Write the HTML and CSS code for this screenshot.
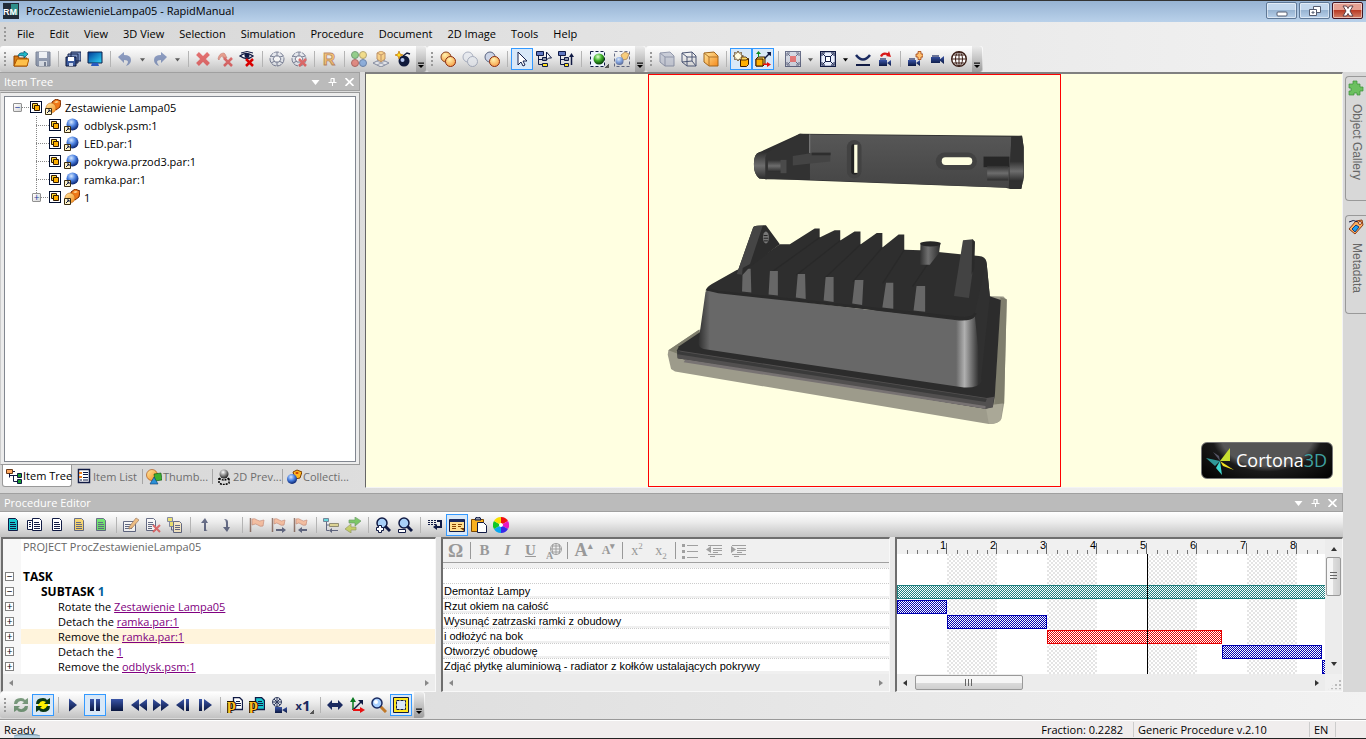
FILE: index.html
```
<!DOCTYPE html>
<html lang="en">
<head>
  <meta charset="utf-8" />
  <title>ProcZestawienieLampa05 - RapidManual</title>
  <meta name="viewport" content="width=device-width, initial-scale=1" />
  <link rel="stylesheet" href="styles.css">
</head>
<body>
  <svg class="sprite" width="0" height="0" aria-hidden="true">
    <defs>
      <linearGradient id="g-orange" x1="0" y1="0" x2="1" y2="1"><stop offset="0" stop-color="#ffe9a0"/><stop offset="1" stop-color="#f58a1c"/></linearGradient>
      <linearGradient id="g-navy" x1="0" y1="0" x2="0" y2="1"><stop offset="0" stop-color="#3a55a8"/><stop offset="1" stop-color="#0a1740"/></linearGradient>
      <linearGradient id="g-screen" x1="0" y1="0" x2="1" y2="1"><stop offset="0" stop-color="#003a98"/><stop offset="1" stop-color="#30d8f8"/></linearGradient>
      <radialGradient id="g-blue" cx=".4" cy=".3" r=".7"><stop offset="0" stop-color="#d5e8ff"/><stop offset=".5" stop-color="#4a80e0"/><stop offset="1" stop-color="#0a2470"/></radialGradient>
      <radialGradient id="g-green" cx=".4" cy=".3" r=".7"><stop offset="0" stop-color="#e0ffd0"/><stop offset=".5" stop-color="#3fb02a"/><stop offset="1" stop-color="#063c08"/></radialGradient>
      <radialGradient id="g-gold" cx=".4" cy=".3" r=".8"><stop offset="0" stop-color="#fff3b0"/><stop offset="1" stop-color="#f7963a"/></radialGradient>
      <radialGradient id="g-grey" cx=".4" cy=".3" r=".7"><stop offset="0" stop-color="#fff"/><stop offset="1" stop-color="#222"/></radialGradient>
      <linearGradient id="g-front" x1="0" y1="0" x2="1" y2="0"><stop offset="0" stop-color="#303030"/><stop offset=".04" stop-color="#686868"/><stop offset=".91" stop-color="#686868"/><stop offset=".94" stop-color="#b0b0b0"/><stop offset=".99" stop-color="#303030"/></linearGradient>
      <linearGradient id="g-wall" x1="0" y1="0" x2="0" y2="1"><stop offset="0" stop-color="#575757"/><stop offset="1" stop-color="#454545"/></linearGradient>
      <linearGradient id="g-tube" x1="0" y1="0" x2="0" y2="1"><stop offset="0" stop-color="#303030"/><stop offset=".5" stop-color="#6d6d6d"/><stop offset="1" stop-color="#2c2c2c"/></linearGradient>
      <linearGradient id="g-tube-v" x1="0" y1="0" x2="1" y2="0"><stop offset="0" stop-color="#303030"/><stop offset=".4" stop-color="#707070"/><stop offset="1" stop-color="#2c2c2c"/></linearGradient>
    </defs>

    <symbol id="i-open" viewBox="0 0 16 16"><path d="M1 15V5h4l1 2h8v8z" fill="#d97a10" stroke="#8a3f00"/><path d="M1 15l3-7h12l-2 7z" fill="#ffc04a" stroke="#b05a00"/><path d="M5 5q1-4 6-3V0l4 3-4 4V5q-4-1-6 0z" fill="#20b8c8" stroke="#054a68" stroke-width=".7"/></symbol>
    <symbol id="i-save" viewBox="0 0 16 16"><path d="M1 1h14v14H2l-1-1z" fill="#5a6a8c" stroke="#33415f"/><path d="M4 1h8v6H4z" fill="#eef2f8"/><path d="M4 10h8v5H4z" fill="#cfd6e2"/><path d="M9 11h2v4H9z" fill="#33415f"/></symbol>
    <symbol id="i-saveall" viewBox="0 0 16 16"><path d="M6 1h10v9H6zM3 3h10v9H3z" fill="#7890c0" stroke="#14224c"/><path d="M1 6h10v9H1z" fill="#3c5a9c" stroke="#0a1538"/><path d="M3 6h6v4H3z" fill="#fff"/><path d="M4 12h4v3H4z" fill="#c8d4ec"/></symbol>
    <symbol id="i-monitor" viewBox="0 0 16 16"><path d="M1 1h14v11H1z" fill="url(#g-screen)" stroke="#0c1c48"/><path d="M5 12h6l1 3H4z" fill="#2a5ac0"/></symbol>
    <symbol id="i-undo" viewBox="0 0 16 16"><path d="M1 6l6-5v3q7 0 7 5 0 4-5 6 2-3 2-4 0-2-4-2v3z" fill="#4a64a0"/></symbol>
    <symbol id="i-redo" viewBox="0 0 16 16"><path d="M15 6L9 1v3Q2 4 2 9q0 4 5 6-2-3-2-4 0-2 4-2v3z" fill="#4a64a0"/></symbol>
    <symbol id="i-x" viewBox="0 0 16 16"><path d="M2.500 2.500l11 11M13.500 2.500l-11 11" stroke="#d91c1c" stroke-width="4"/></symbol>
    <symbol id="i-fx" viewBox="0 0 16 16"><path d="M1 8q1-6 6-6l1 1 2 4H6V5q-3 0-4 4z" fill="#e06a50" stroke="#b03020" stroke-width=".6"/><path d="M7 7l8 8M15 7l-8 8" stroke="#d01818" stroke-width="2.500"/></symbol>
    <symbol id="i-eyex" viewBox="0 0 16 16"><path d="M1 5q6-5 13 0-6 5-13 0z" fill="#fff" stroke="#101a44" stroke-width="1.400"/><circle cx="8" cy="4.500" r="2.500" fill="#101a44"/><path d="M2 2q6-3 12 0" stroke="#101a44" fill="none"/><path d="M7 8l7 7M14 8l-7 7" stroke="#d90000" stroke-width="2.500"/></symbol>
    <symbol id="i-cell" viewBox="0 0 16 16"><circle cx="8" cy="8" r="7" fill="#dfe3ec" stroke="#303a5c" stroke-dasharray="5 1"/><path d="M8 1v4M8 11v4M1.500 5l4 1M14.500 5l-4 1M2 12l4-2M14 12l-4-2" stroke="#303a5c"/><path d="M6 5h4l2 3-2 3H6L4 8z" fill="#fff" stroke="#303a5c"/></symbol>
    <symbol id="i-cellx" viewBox="0 0 16 16"><circle cx="8" cy="8" r="7" fill="#dfe3ec" stroke="#303a5c" stroke-dasharray="5 1"/><path d="M8 1v4M1.500 5l4 1M14.500 5l-4 1M2 12l4-2" stroke="#303a5c"/><path d="M6 5h4l2 3-2 3H6L4 8z" fill="#fff" stroke="#303a5c"/><path d="M8 8l7 7M15 8l-7 7" stroke="#d91c1c" stroke-width="2.500"/></symbol>
    <symbol id="i-r" viewBox="0 0 16 16"><text x="2" y="14" font-family="Liberation Sans" font-size="17" font-weight="bold" fill="#ffab20" stroke="#9a4a10" stroke-width=".8">R</text></symbol>
    <symbol id="i-dots" viewBox="0 0 16 16"><circle cx="4" cy="4" r="3.500" fill="#58b848" stroke="#27672a"/><circle cx="12" cy="4" r="3.500" fill="#f2d048" stroke="#8c7420"/><circle cx="4" cy="12" r="3.500" fill="#e25548" stroke="#8a2018"/><circle cx="12" cy="12" r="3.500" fill="#5a8fd8" stroke="#234a88"/></symbol>
    <symbol id="i-grid3d" viewBox="0 0 16 16"><path d="M0 12l8-4 8 4-8 4z" fill="#e6e8ef" stroke="#4c587a"/><path d="M4 10l8 4M12 10l-8 4" stroke="#4c587a" stroke-width=".7"/><path d="M4 2l4-2 4 2v6l-4 3-4-3z" fill="#ffc04a" stroke="#a35a10"/><path d="M4 2l4 2 4-2M8 4v6" stroke="#a35a10" fill="none"/></symbol>
    <symbol id="i-bomb" viewBox="0 0 16 16"><circle cx="9" cy="10" r="5.500" fill="#101a3c"/><circle cx="7.500" cy="9" r="2" fill="#b8c8f0"/><path d="M8 5l4-3 3 1" stroke="#101a3c" stroke-width="1.500" fill="none"/><path d="M4 0l1 3 3 1-3 1-1 3-1-3-3-1 3-1z" fill="#ffe020" stroke="#c07000" stroke-width=".7"/></symbol>
    <symbol id="i-bal2" viewBox="0 0 16 16"><circle cx="6" cy="6" r="5" fill="url(#g-gold)" stroke="#8a4420"/><circle cx="10.500" cy="10.500" r="5" fill="url(#g-gold)" stroke="#8a2a10"/></symbol>
    <symbol id="i-bal0" viewBox="0 0 16 16"><circle cx="6" cy="6" r="5" fill="#e2e6ee" stroke="#7c86a0"/><circle cx="10.500" cy="10.500" r="5" fill="#e2e6ee" stroke="#7c86a0"/></symbol>
    <symbol id="i-bal1" viewBox="0 0 16 16"><circle cx="6" cy="6" r="5" fill="#ccd4e6" stroke="#5a6480"/><circle cx="10.500" cy="10.500" r="5" fill="url(#g-gold)" stroke="#8a2a10"/></symbol>
    <symbol id="i-cursor" viewBox="0 0 16 16"><path d="M4 1v13l3-3 2 4 2-1-2-4h4z" fill="#fff" stroke="#14204c"/></symbol>
    <symbol id="i-treesel" viewBox="0 0 16 16"><path d="M.500.500h7v4h-7z" fill="#6078c0" stroke="#101a44"/><path d="M2.500 5v8.500H7M3 8.500h4" stroke="#101a44" fill="none"/><path d="M6.500 6.500h4v3h-4z" fill="#8c94a8" stroke="#101a44"/><path d="M6.500 12.500h5v3h-5z" fill="#ffe020" stroke="#101a44"/><path d="M10.500 1v8l2-2h3z" fill="#fff" stroke="#101a44"/></symbol>
    <symbol id="i-treeup" viewBox="0 0 16 16"><path d="M.500.500h7v4h-7z" fill="#6078c0" stroke="#101a44"/><path d="M2.500 5v8.500H7M3 8.500h4" stroke="#101a44" fill="none"/><path d="M6.500 6.500h4v3h-4z" fill="#8c94a8" stroke="#101a44"/><path d="M6.500 12.500h4v3h-4z" fill="#ffe020" stroke="#101a44"/><path d="M13.500 14V5" stroke="#101a44" stroke-width="1.500"/><path d="M11 6l2.500-4L16 6z" fill="#101a44"/></symbol>
    <symbol id="i-ball-sel" viewBox="0 0 16 16"><rect x=".5" y=".5" width="14" height="15" fill="#eef4ff" stroke="#101a44" stroke-dasharray="3 2"/><circle cx="9" cy="8" r="5.500" fill="url(#g-green)"/></symbol>
    <symbol id="i-part-sel" viewBox="0 0 16 16"><rect x=".5" y=".5" width="15" height="15" fill="none" stroke="#101a44" stroke-dasharray="3 2"/><path d="M7 4l4-3 4 2-2 5-4 1z" fill="#ffb830" stroke="#a06010"/><circle cx="5.500" cy="10" r="4" fill="url(#g-blue)"/></symbol>
    <symbol id="i-cube" viewBox="0 0 16 16"><path d="M1 2l10-1 4 4v10H6l-5-4z" fill="#b0b6c8" stroke="#566080"/><path d="M1 2l5 4h9M6 6v9" stroke="#566080" fill="none"/></symbol>
    <symbol id="i-cubew" viewBox="0 0 16 16"><path d="M1 2l10-1 4 4v10H6l-5-4zM1 2l5 4h9M6 6v9M11 1v9l4 5M11 10l-10 1" fill="none" stroke="#4c5674"/></symbol>
    <symbol id="i-cubeo" viewBox="0 0 16 16"><path d="M1 2l10-1 4 4v10H6l-5-4z" fill="url(#g-orange)" stroke="#a0641c"/><path d="M1 2l5 4h9M6 6v9" stroke="#b0742c" fill="none"/></symbol>
    <symbol id="i-explode" viewBox="0 0 16 16"><path d="M7.500 8.500h6l2-1v6l-2 2h-6z" fill="#ffb000" stroke="#3a1c00"/><path d="M5 7l3-1h5l2 2-2 1H8z" fill="#ffd860" stroke="#3a1c00" stroke-width=".8"/><path d="M5 0l1.200 2.200L8.500 1.500 8 4l2.500 1L8 6l.500 2.500L6.200 8 5 10 3.800 8l-2.300.500L2 6 0 5l2-1-.500-2.500 2.300.700z" fill="#fffbe0" stroke="#5a3a10" stroke-width=".8"/></symbol>
    <symbol id="i-moveaxis" viewBox="0 0 16 16"><path d="M1 8l2-2h7v7l-2 2H1z" fill="#ffd860" stroke="#3a1c00"/><path d="M1 8h7v7H1z" fill="#ffb000" stroke="#3a1c00"/><path d="M3 6V3H1l2.500-3L6 3H4v3z" fill="#0a8a20"/><path d="M9 7l4-4-1-2h4v4l-2-1-4 4z" fill="#101a44"/><path d="M8 12.500h4V11l4 2.500-4 2.500v-2H8z" fill="#e81010"/></symbol>
    <symbol id="i-fitred" viewBox="0 0 16 16"><rect x=".5" y=".5" width="15" height="15" fill="#c4cadc" stroke="#101a44"/><path d="M2 5V2h3M11 2h3v3M14 11v3h-3M5 14H2v-3M3 3l3 3M13 3l-3 3M3 13l3-3M13 13l-3-3" stroke="#101a44" fill="none"/><path d="M5 5h6v6H5z" fill="#e03030"/></symbol>
    <symbol id="i-fit" viewBox="0 0 16 16"><rect x=".5" y=".5" width="15" height="15" fill="#eaf0ff" stroke="#101a44" stroke-width="1.500"/><path d="M2 5V2h3M11 2h3v3M14 11v3h-3M5 14H2v-3M3 3l3 3M13 3l-3 3M3 13l3-3M13 13l-3-3" stroke="#101a44" fill="none"/><path d="M5.500 5.500h5v5h-5z" fill="#fff" stroke="#101a44"/></symbol>
    <symbol id="i-floor" viewBox="0 0 16 16"><path d="M1 4q7 9 14 0" stroke="#1a2a60" stroke-width="2.500" fill="none"/><path d="M1 14h14" stroke="#101a44" stroke-width="2"/></symbol>
    <symbol id="i-camundo" viewBox="0 0 16 16"><path d="M3 5q2-5 8-3l1-2 2 6-5-1 1-1Q6 3 5 6z" fill="#d81818"/><path d="M2 9h8v6H2zM10 12l4-3v6z" fill="url(#g-navy)"/><path d="M3 7h6v2H3z" fill="#6a7498"/></symbol>
    <symbol id="i-camplus" viewBox="0 0 16 16"><path d="M1 9h8v6H1zM9 12l4-3v6z" fill="url(#g-navy)"/><path d="M2 7h6v2H2z" fill="#6a7498"/><path d="M11 .500h3V3h2v3h-2v2.500h-3V6H9V3h2z" fill="#ffc070" stroke="#a04010" stroke-width=".8"/></symbol>
    <symbol id="i-cam" viewBox="0 0 16 16"><path d="M2 6h9v6H2zM10 9l5-4v8z" fill="url(#g-navy)"/><path d="M3 4h7v2H3z" fill="#6a7498"/></symbol>
    <symbol id="i-globe" viewBox="0 0 16 16"><circle cx="8" cy="8" r="7.300" fill="#fff" stroke="#3a1c14" stroke-width="1.400"/><path d="M8 1v14M1 8h14M2.500 4h11M2.500 12h11" stroke="#3a1c14"/><ellipse cx="8" cy="8" rx="3.500" ry="7" fill="none" stroke="#3a1c14"/></symbol>

    <symbol id="i-assembly" viewBox="0 0 16 16"><path d="M7 3l4-3 5 2-1 6-4 3-4-3z" fill="#f07818" stroke="#7a2c00"/><path d="M9 3l3-1 2 1-3 1z" fill="#ffd890"/><circle cx="6" cy="9" r="5" fill="url(#g-orange)" stroke="#b05000" stroke-width=".5"/><path d="M.500 9.500h6v6h-6z" fill="#fff4c8" stroke="#3a2c10"/><path d="M2 14l3-3M3 11h2v2" stroke="#101a44" fill="none"/></symbol>
    <symbol id="i-part" viewBox="0 0 16 16"><circle cx="8.500" cy="7.500" r="6" fill="url(#g-blue)"/><path d="M.500 9.500h6v6h-6z" fill="#fff4c8" stroke="#3a2c10"/><path d="M2 14l3-3M3 11h2v2" stroke="#101a44" fill="none"/></symbol>

    <symbol id="i-tabtree" viewBox="0 0 16 16"><path d="M.500 1.500h6v4h-6z" fill="#ffa860" stroke="#6a3818"/><path d="M3.500 5.500v4M3.500 7.500h8M7.500 7.500v6h4M7 3.500h2" stroke="#101a44" fill="none"/><path d="M11.500 5.500h4v4h-4zM11.500 11.500h4v4h-4z" fill="#18a030" stroke="#101a44"/></symbol>
    <symbol id="i-tablist" viewBox="0 0 16 16"><path d="M2.500 1.500h11v13h-11z" fill="#fff" stroke="#101a44" stroke-width="1.500"/><path d="M3 5h3M3 9h3" stroke="#f08020" stroke-width="2"/><path d="M4 12h2M7 4.500h5M7 6.500h5M7 9.500h5M7 12h5" stroke="#101a44"/></symbol>
    <symbol id="i-tabthumb" viewBox="0 0 16 16"><circle cx="6" cy="6" r="5.500" fill="url(#g-orange)" stroke="#a04000" stroke-width=".6"/><path d="M8 5l7-1 1 7-7 1z" fill="#40b030" stroke="#0a5010" stroke-width=".6"/><path d="M8 8l4 7H4z" fill="#2a90d8" stroke="#0a3a70" stroke-width=".6"/></symbol>
    <symbol id="i-tab2d" viewBox="0 0 16 16"><circle cx="8" cy="5" r="4.500" fill="url(#g-grey)"/><path d="M3 9q5 4 10 0M3 9v5q5 3 10 0V9" stroke="#000" stroke-width="1.500" stroke-dasharray="2 1" fill="none"/></symbol>
    <symbol id="i-tabcoll" viewBox="0 0 16 16"><path d="M7 3l4-2 5 2-2 6-5 1z" fill="#ffb820" stroke="#7a3c00"/><path d="M9 4l2-1 2 1-2 1z" fill="#c02000"/><circle cx="6" cy="10" r="5" fill="url(#g-blue)"/></symbol>
    <symbol id="i-puzzle" viewBox="0 0 16 16"><path d="M1 4h4V1h4v3h3v3h3v4h-3v4H9v-2H6v2H1v-4h2V8H1z" fill="#6cc060" stroke="#3a9038" stroke-width=".7"/></symbol>
    <symbol id="i-tag" viewBox="0 0 16 16"><path d="M1 10L8 2l6-1 1 5-8 9z" fill="#ffb060" stroke="#8a3c18"/><path d="M4 10l4-4 3 2-4 5z" fill="#20a0f0" stroke="#104080"/><circle cx="12" cy="4" r="1.500" fill="#fff" stroke="#8a3c18"/><path d="M1 3q4-3 9 0" stroke="#101a44" fill="none"/></symbol>

    <symbol id="i-doc" viewBox="0 0 16 16"><path d="M3.500 1.500h7l2 2v10h-9z" fill="currentColor" stroke="#101a44"/><path d="M5 5.500h5M5 7.500h6M5 9.500h6M5 11.500h6" stroke="#101a44"/></symbol>
    <symbol id="i-docs" viewBox="0 0 16 16"><path d="M.500 3.500h7v9h-7z" fill="#fff" stroke="#101a44"/><path d="M5.500 1.500h7l2 2v10h-9z" fill="#fff" stroke="#101a44"/><path d="M2 5.500h2M2 7.500h2M2 9.500h2M7 5.500h5M7 7.500h6M7 9.500h6M7 11.500h6" stroke="#101a44"/></symbol>
    <symbol id="i-edit" viewBox="0 0 16 16"><path d="M.500 4.500h12v10H.500z" fill="#fff" stroke="#101a44"/><path d="M2 7.500h6M2 9.500h5M2 11.500h7" stroke="#101a44"/><path d="M6 10l7-9 3 2-7 8-3 1z" fill="#f0a040" stroke="#7a4418" stroke-width=".8"/></symbol>
    <symbol id="i-docx" viewBox="0 0 16 16"><path d="M1.500 1.500h7l2 2v10h-9z" fill="#fff" stroke="#101a44"/><path d="M3 5.500h5M3 7.500h6M3 9.500h4M3 11.500h4" stroke="#101a44"/><path d="M8 8l7 7M15 8l-7 7" stroke="#d82020" stroke-width="2"/></symbol>
    <symbol id="i-docy" viewBox="0 0 16 16"><path d="M.500.500h5v4h-5zM2.500 4.500h5v5h-5z" fill="#e8d820" stroke="#3c466c"/><path d="M6.500 4.500h6l2 2v9h-8z" fill="#ffe8b0" stroke="#101a44"/><path d="M8 8.500h5M8 10.500h5M8 12.500h5M4.500 10v3H6" stroke="#101a44" fill="none"/></symbol>
    <symbol id="i-up" viewBox="0 0 16 16"><path d="M7 14V6H4l4-5 3 5H9v6q0 2 2 2z" fill="#101a44"/></symbol>
    <symbol id="i-down" viewBox="0 0 16 16"><path d="M5 2q4 0 4 3v5h2l-3 5-4-5h3V6q0-3-2-4z" fill="#101a44"/></symbol>
    <symbol id="i-flag" viewBox="0 0 16 16"><path d="M1.500 1v14" stroke="#5a3020" stroke-width="1.500"/><path d="M3 2q3-1 5 1t7 0l-1 6q-3 1-5-1t-6 0z" fill="#f8a070" stroke="#b05030" stroke-width=".7"/></symbol>
    <symbol id="i-flagr" viewBox="0 0 16 16"><path d="M1.500 1v14" stroke="#5a3020" stroke-width="1.500"/><path d="M3 2q3-1 5 1t6 0l-1 5q-3 1-5-1t-5 0z" fill="#f8a070" stroke="#b05030" stroke-width=".7"/><path d="M5 12h6v-2l4 3-4 3v-2H5z" fill="#101a44"/></symbol>
    <symbol id="i-flagl" viewBox="0 0 16 16"><path d="M1.500 1v14" stroke="#5a3020" stroke-width="1.500"/><path d="M3 2q3-1 5 1t6 0l-1 5q-3 1-5-1t-5 0z" fill="#f8a070" stroke="#b05030" stroke-width=".7"/><path d="M14 12H9v-2l-4 3 4 3v-2h5z" fill="#101a44"/></symbol>
    <symbol id="i-branch" viewBox="0 0 16 16"><path d="M.500 1.500h5v3h-5z" fill="#10c8d0" stroke="#204060"/><path d="M3.500 5v8.500H6M3 8h3" stroke="#101a44" fill="none"/><path d="M6.500 6.500h9v3h-9z" fill="#d8c860" stroke="#5a5428"/><path d="M15 13H9v-2l-3 2.500L9 16v-2h6z" fill="#101a44"/></symbol>
    <symbol id="i-swap" viewBox="0 0 16 16"><path d="M4 3h6V0l6 4-6 5V6H4z" fill="#30b010" stroke="#206818" stroke-width=".7"/><path d="M11 10H6V7l-6 5 6 4v-3h5z" fill="#b8c820" stroke="#687018" stroke-width=".7"/></symbol>
    <symbol id="i-zoomin" viewBox="0 0 16 16"><path d="M10 9l5 5" stroke="#101a44" stroke-width="3"/><circle cx="7" cy="6" r="5" fill="#a8d0f8" stroke="#101a44" stroke-width="1.500"/><path d="M3.500 8.500h3v2h2v3h-2v2h-3v-2h-2v-3h2z" fill="#fff" stroke="#101a44"/></symbol>
    <symbol id="i-zoomout" viewBox="0 0 16 16"><path d="M10 9l5 5" stroke="#101a44" stroke-width="3"/><circle cx="7" cy="6" r="5" fill="#a8d0f8" stroke="#101a44" stroke-width="1.500"/><path d="M1.500 12.500h7v3h-7z" fill="#fff" stroke="#101a44"/></symbol>
    <symbol id="i-wrap" viewBox="0 0 16 16"><path d="M1 3h2v1H1zM4 3h2v1H4zM7 3h2v1H7zM1 5h2v1H1zM4 5h2v1H4zM7 5h2v1H7zM1 7h2v1H1zM4 7h2v1H4zM7 7h2v1H7zM10 3h5v8h-5v2l-4-3 4-3v2h3V5h-3z" fill="#101a44"/></symbol>
    <symbol id="i-card" viewBox="0 0 16 16"><path d="M.500 2.500h15v12H.500z" fill="#ffe090" stroke="#101a44"/><path d="M1 2h14v3H1z" fill="#1a2a60"/><path d="M3 7.500h4M3 9.500h4M3 11.500h4M9 7.500h4M9 9.500h3" stroke="#8a4400"/><path d="M11 11h4v3z" fill="#7a3c00"/></symbol>
    <symbol id="i-paste" viewBox="0 0 16 16"><path d="M.500 2.500h12v12H.500z" fill="#f8b020" stroke="#7a4800"/><path d="M4 3q0-3 3-3t3 3z" fill="#9098a8" stroke="#101a44"/><path d="M6.500 5.500h6l3 3v7h-9z" fill="#fff" stroke="#101a44"/></symbol>
    <symbol id="i-wheel" viewBox="0 0 16 16"><path d="M8 8V0a8 8 0 0 1 7 4z" fill="#f01010"/><path d="M8 8l7-4a8 8 0 0 1 0 8z" fill="#e818c0"/><path d="M8 8l7 4a8 8 0 0 1-7 4z" fill="#3828e8"/><path d="M8 8v8a8 8 0 0 1-7-4z" fill="#08a8f0"/><path d="M8 8l-7 4a8 8 0 0 1 0-8z" fill="#10c828"/><path d="M8 8L1 4a8 8 0 0 1 7-4z" fill="#f8e000"/><circle cx="8" cy="8" r="2" fill="#fff"/></symbol>

    <symbol id="i-cycle" viewBox="0 0 16 16"><path d="M1 7q0-6 7-6 3 0 4 2l3-2v6H9l2-2q-5-3-7 2zM15 9q0 6-7 6-3 0-4-2l-3 2V9h6l-2 2q5 3 7-2z" fill="#2a6030"/></symbol>
    <symbol id="i-cycley" viewBox="0 0 16 16"><circle cx="8" cy="8" r="5" fill="#fff200"/><path d="M1 7q0-6 7-6 3 0 4 2l3-2v6H9l2-2q-5-3-7 2zM15 9q0 6-7 6-3 0-4-2l-3 2V9h6l-2 2q5 3 7-2z" fill="#0a3814"/></symbol>
    <symbol id="i-play" viewBox="0 0 16 16"><path d="M4 1.500v13L12 8z" fill="url(#g-navy)"/></symbol>
    <symbol id="i-pause" viewBox="0 0 16 16"><path d="M3 2h4v12H3zM9 2h4v12H9z" fill="url(#g-navy)"/></symbol>
    <symbol id="i-stop" viewBox="0 0 16 16"><path d="M2 2h12v12H2z" fill="url(#g-navy)"/></symbol>
    <symbol id="i-rew" viewBox="0 0 16 16"><path d="M8 2v12L0 8zM16 2v12L8 8z" fill="url(#g-navy)"/></symbol>
    <symbol id="i-ffw" viewBox="0 0 16 16"><path d="M0 2v12l8-6zM8 2v12l8-6z" fill="url(#g-navy)"/></symbol>
    <symbol id="i-stepb" viewBox="0 0 16 16"><path d="M9 2v12L1 8zM11 2h3v12h-3z" fill="url(#g-navy)"/></symbol>
    <symbol id="i-stepf" viewBox="0 0 16 16"><path d="M7 2v12l8-6zM2 2h3v12H2z" fill="url(#g-navy)"/></symbol>
    <symbol id="i-film" viewBox="0 0 16 16"><circle cx="6" cy="5" r="4.500" fill="#dfe3ec" stroke="#303a5c"/><path d="M6 1v8M2 5h8M3 2l6 6M9 2L3 8" stroke="#303a5c"/><path d="M4 10h7v6H4zM11 13l5-3v6z" fill="url(#g-navy)"/></symbol>
    <symbol id="i-width" viewBox="0 0 16 16"><path d="M0 8l5-5v3h6V3l5 5-5 5v-3H5v3z" fill="#1a2a60"/></symbol>
    <symbol id="i-axes" viewBox="0 0 16 16"><path d="M4 3v10" stroke="#0a7820" stroke-width="1.500"/><path d="M1 5l3-5 3 5z" fill="#0a7820"/><path d="M4 13l8-8" stroke="#101a44" stroke-width="1.500"/><path d="M9 3h5v5z" fill="#101a44"/><path d="M4 13h8" stroke="#e81010" stroke-width="2"/><path d="M11 10l5 3-5 3z" fill="#e81010"/></symbol>
    <symbol id="i-magnify" viewBox="0 0 16 16"><path d="M9 9l6 6" stroke="#c07828" stroke-width="3"/><circle cx="6" cy="6" r="5" fill="#a8d0ff" stroke="#1a2a60" stroke-width="1.500"/><circle cx="5" cy="5" r="2" fill="#fff"/></symbol>
    <symbol id="i-safe" viewBox="0 0 16 16"><path d="M.500.500h15v15H.500z" fill="#ffe820" stroke="#101a44"/><path d="M3.500 3.500h9v9h-9z" fill="#d8e8f8" stroke="#101a44" stroke-dasharray="3 1"/></symbol>
    <symbol id="i-pdoc" viewBox="0 0 16 16"><path d="M6.500.500h6l3 3v9h-9z" fill="currentColor" stroke="#101a44" stroke-width="1.300"/><path d="M9 4.500h4M9 6.500h5M9 8.500h5" stroke="#101a44"/><text x="0" y="13" font-family="Liberation Serif" font-size="16" font-weight="bold" fill="#ffc020" stroke="#201000" stroke-width="2" paint-order="stroke">p</text></symbol>
    <symbol id="i-pin" viewBox="0 0 8 8"><path d="M2.500 4.500v-4h3v4M0 4.500h8M4 5v3" stroke="currentColor" fill="none"/><path d="M5 0h1v5H5z" fill="currentColor"/></symbol>
    <symbol id="i-close" viewBox="0 0 8 8"><path d="M0 0l8 8M8 0L0 8" stroke="currentColor" stroke-width="1.700"/></symbol>
    <symbol id="i-caret" viewBox="0 0 8 8"><path d="M0 2h8L4 7z" fill="currentColor"/></symbol>
    <symbol id="i-chev" viewBox="0 0 8 8"><path d="M0 1.500h8" stroke="#000" stroke-width="1.500"/><path d="M0 4h8L4 8z"/></symbol>

    <symbol id="i-lines" viewBox="0 0 16 16"><path d="M0 1h3v3H0zM0 7h3v3H0zM0 13h3v3H0zM5 2h11v1H5zM5 8h11v1H5zM5 14h11v1H5z" fill="#a0a0a0"/></symbol>
    <symbol id="i-outdent" viewBox="0 0 16 16"><path d="M2 2.500h14M7 5.500h9M7 7.500h9M7 9.500h5M2 11.500h14M4 13.500h5" stroke="#a0a0a0"/><path d="M5 3v7L0 6.500z" fill="#a0a0a0"/></symbol>
    <symbol id="i-indent" viewBox="0 0 16 16"><path d="M2 2.500h14M7 5.500h9M7 7.500h9M7 9.500h5M2 11.500h14M4 13.500h5" stroke="#a0a0a0"/><path d="M1 3v7l5-3.500z" fill="#a0a0a0"/></symbol>
    <symbol id="i-fontglobe" viewBox="0 0 16 16"><circle cx="10" cy="6" r="5.500" fill="none" stroke="#a0a0a0"/><path d="M10 0v12M5 6h11M6 3h8M6 9h8M7 1q-2 5 0 10M13 1q2 5 0 10" stroke="#a0a0a0" fill="none"/><text x="0" y="16" font-family="Liberation Serif" font-size="10" font-weight="bold" fill="#999">A</text></symbol>
  </svg>

  <header class="titlebar">
    <svg class="app-icon" viewBox="0 0 16 16" aria-hidden="true"><path d="M0 0h16v16H0z" fill="#222c38"/><path d="M8 1h7v11H8z" fill="#2f8f8a"/><text x="0" y="12" font-family="Liberation Sans" font-size="9" font-weight="bold" fill="#fff">RM</text></svg>
    <h1 class="title">ProcZestawienieLampa05 - RapidManual</h1>
    <div class="window-buttons">
      <button class="win" aria-label="Minimize"><svg viewBox="0 0 14 12"><rect x="2" y="7" width="10" height="4" rx="1" fill="#fff" stroke="#555c70"/></svg></button>
      <button class="win" aria-label="Restore"><svg viewBox="0 0 14 12"><path d="M5.500 1.500h7v6h-7z" fill="#fff" stroke="#555c70"/><path d="M1.500 4.500h7v6h-7z" fill="#fff" stroke="#555c70"/><path d="M4 7h2v1H4z" stroke="#555c70" fill="none"/></svg></button>
      <button class="win win-close" aria-label="Close"><svg viewBox="0 0 14 12"><path d="M2 1h3.500L7 3.500 8.500 1H12L9 6l3 5H8.500L7 8.500 5.500 11H2l3-5z" fill="#fff" stroke="#5c4048"/></svg></button>
    </div>
  </header>

  <nav class="menubar">
    <span class="grip"></span>
    <button>File</button><button>Edit</button><button>View</button><button>3D View</button><button>Selection</button><button>Simulation</button><button>Procedure</button><button>Document</button><button>2D Image</button><button>Tools</button><button>Help</button>
  </nav>

  <div class="toolbars">
    <div class="toolbar">
      <span class="grip"></span>
      <button class="tool" aria-label="Open"><svg><use href="#i-open"/></svg></button>
      <button class="tool off" aria-label="Save"><svg><use href="#i-save"/></svg></button>
      <span class="sep"></span>
      <button class="tool" aria-label="Save all"><svg><use href="#i-saveall"/></svg></button>
      <button class="tool" aria-label="Preview"><svg><use href="#i-monitor"/></svg></button>
      <span class="sep"></span>
      <button class="tool off" aria-label="Undo"><svg><use href="#i-undo"/></svg></button>
      <button class="drop off" aria-label="Undo list"><svg><use href="#i-caret"/></svg></button>
      <button class="tool off" aria-label="Redo"><svg><use href="#i-redo"/></svg></button>
      <button class="drop off" aria-label="Redo list"><svg><use href="#i-caret"/></svg></button>
      <span class="sep"></span>
      <button class="tool off" aria-label="Delete"><svg><use href="#i-x"/></svg></button>
      <button class="tool off" aria-label="Delete animation"><svg><use href="#i-fx"/></svg></button>
      <button class="tool" aria-label="Hide"><svg><use href="#i-eyex"/></svg></button>
      <span class="sep"></span>
      <button class="tool off" aria-label="Group"><svg><use href="#i-cell"/></svg></button>
      <button class="tool off" aria-label="Ungroup"><svg><use href="#i-cellx"/></svg></button>
      <span class="sep"></span>
      <button class="tool off" aria-label="Rename"><svg><use href="#i-r"/></svg></button>
      <span class="sep"></span>
      <button class="tool off" aria-label="Materials"><svg><use href="#i-dots"/></svg></button>
      <button class="tool off" aria-label="Align"><svg><use href="#i-grid3d"/></svg></button>
      <button class="tool" aria-label="Explode"><svg><use href="#i-bomb"/></svg></button>
      <button class="more" aria-label="More"><svg><use href="#i-chev"/></svg></button>
    </div>
    <div class="toolbar">
      <span class="grip"></span>
      <button class="tool" aria-label="Show all"><svg><use href="#i-bal2"/></svg></button>
      <button class="tool off" aria-label="Hide all"><svg><use href="#i-bal0"/></svg></button>
      <button class="tool" aria-label="Show selected"><svg><use href="#i-bal1"/></svg></button>
      <span class="sep"></span>
      <button class="tool active" aria-label="Select"><svg><use href="#i-cursor"/></svg></button>
      <button class="tool" aria-label="Select in tree"><svg><use href="#i-treesel"/></svg></button>
      <button class="tool" aria-label="Select parent"><svg><use href="#i-treeup"/></svg></button>
      <span class="sep"></span>
      <button class="tool tool-wide" aria-label="Selection mode"><svg><use href="#i-ball-sel"/></svg></button>
      <button class="tool off" aria-label="Select parts"><svg><use href="#i-part-sel"/></svg></button>
      <button class="more" aria-label="More"><svg><use href="#i-chev"/></svg></button>
    </div>
    <div class="toolbar">
      <span class="grip"></span>
      <button class="tool off" aria-label="Shaded"><svg><use href="#i-cube"/></svg></button>
      <button class="tool" aria-label="Wireframe"><svg><use href="#i-cubew"/></svg></button>
      <button class="tool" aria-label="Solid"><svg><use href="#i-cubeo"/></svg></button>
      <span class="sep"></span>
      <button class="tool active" aria-label="Highlight parts"><svg><use href="#i-explode"/></svg></button>
      <button class="tool active" aria-label="Move along axis"><svg><use href="#i-moveaxis"/></svg></button>
      <span class="sep"></span>
      <button class="tool off" aria-label="Fit selection"><svg><use href="#i-fitred"/></svg></button>
      <button class="drop off" aria-label="Fit selection options"><svg><use href="#i-caret"/></svg></button>
      <button class="tool" aria-label="Fit all"><svg><use href="#i-fit"/></svg></button>
      <button class="drop" aria-label="Fit all options"><svg><use href="#i-caret"/></svg></button>
      <button class="tool" aria-label="Straighten"><svg><use href="#i-floor"/></svg></button>
      <button class="tool" aria-label="Restore view"><svg><use href="#i-camundo"/></svg></button>
      <span class="sep"></span>
      <button class="tool" aria-label="Add viewpoint"><svg><use href="#i-camplus"/></svg></button>
      <button class="tool" aria-label="Viewpoint"><svg><use href="#i-cam"/></svg></button>
      <button class="tool" aria-label="Globe"><svg><use href="#i-globe"/></svg></button>
      <button class="more" aria-label="More"><svg><use href="#i-chev"/></svg></button>
    </div>
  </div>

  <div class="workspace">
    <div class="docks">
      <div class="upper">
        <aside class="item-panel">
          <div class="caption">
            <h2>Item Tree</h2>
            <button aria-label="Options"><svg><use href="#i-caret"/></svg></button>
            <button aria-label="Pin"><svg><use href="#i-pin"/></svg></button>
            <button aria-label="Close"><svg><use href="#i-close"/></svg></button>
          </div>
          <div class="tree-frame">
            <ul class="tree">
              <li>
                <div class="node"><button class="expander" aria-label="Collapse">−</button><span class="twig"></span><label><input type="checkbox" checked><svg><use href="#i-assembly"/></svg>Zestawienie Lampa05</label></div>
                <ul class="branch">
                  <li><div class="node"><span class="twig twig-leaf"></span><label><input type="checkbox" checked><svg><use href="#i-part"/></svg>odblysk.psm:1</label></div></li>
                  <li><div class="node"><span class="twig twig-leaf"></span><label><input type="checkbox" checked><svg><use href="#i-part"/></svg>LED.par:1</label></div></li>
                  <li><div class="node"><span class="twig twig-leaf"></span><label><input type="checkbox" checked><svg><use href="#i-part"/></svg>pokrywa.przod3.par:1</label></div></li>
                  <li><div class="node"><span class="twig twig-leaf"></span><label><input type="checkbox" checked><svg><use href="#i-part"/></svg>ramka.par:1</label></div></li>
                  <li class="last"><div class="node"><button class="expander" aria-label="Expand">+</button><span class="twig"></span><label><input type="checkbox" checked><svg><use href="#i-assembly"/></svg>1</label></div></li>
                </ul>
              </li>
            </ul>
          </div>
          <div class="tabs">
            <button class="tab current"><svg><use href="#i-tabtree"/></svg>Item Tree</button>
            <button class="tab"><svg><use href="#i-tablist"/></svg>Item List</button>
            <button class="tab"><svg><use href="#i-tabthumb"/></svg>Thumb...</button>
            <button class="tab"><svg><use href="#i-tab2d"/></svg>2D Prev...</button>
            <button class="tab"><svg><use href="#i-tabcoll"/></svg>Collecti...</button>
          </div>
        </aside>

        <main class="view3d">
          <div class="frame">
            <svg class="model" viewBox="27 -78 1236 1239" role="img" aria-label="Lamp model">
              <!-- bracket -->
              <path d="M480 99L1150 105 1155 140V230L1148 266H1115L1100 262 510 240 358 234Q342 220 342 196 340 160 358 155z" fill="#2f2f2f"/>
              <path d="M510 101L1118 108 1110 262 510 238z" fill="url(#g-wall)"/>
              <path d="M480 99L510 101V238L375 236V160z" fill="#323232"/>
              <path d="M510 101v56" stroke="#858585" stroke-width="3"/>
              <path d="M358 155h24l-6 16v60l6 5-24-2Q342 220 342 196 340 160 358 155z" fill="url(#g-tube)"/>
              <path d="M384 178h54v36h-54z" fill="url(#g-tube)"/><path d="M422 178h18v40h-18z" fill="#4a4a4a"/>
              <path d="M459 166l58-9h55v26l-58 6-55 6z" fill="#444"/><path d="M516 156h57v8h-57z" fill="#2e2e2e"/>
              <rect x="622" y="118" width="44" height="116" rx="22" fill="#424242"/><rect x="635" y="130" width="20" height="92" rx="9" fill="#222"/><path d="M644 132h10v85h-10z" fill="#ffffe1"/>
              <rect x="890" y="156" width="124" height="52" rx="26" fill="#424242"/><rect x="908" y="170" width="92" height="23" rx="11" fill="#ffffe1"/>
              <path d="M1034 168h78v32h-78z" fill="#262626"/><path d="M1045 196h64v44h-64z" fill="url(#g-tube)"/>
              <path d="M1118 108l-6 156h36l7-36v-88l-5-35z" fill="#303030"/><path d="M1114 182h40v60h-42z" fill="url(#g-tube)"/>
              <!-- glass base -->
              <path d="M176 690L84 752 82 765 92 808 104 816 1050 974Q1080 974 1088 958L1096 912 1104 600 1094 590 1040 588z" fill="#9d9b8b"/>
              <path d="M176 690L84 752 112 762 180 705zM1085 592l19 6-8 314-30 6z" fill="#7f7e6d"/>
              <path d="M1040 918l52-6-6 50q-10 12-36 12z" fill="#aaa897"/>
              <path d="M178 698L116 740 110 752 112 776 1040 928 1062 922 1068 890 1086 600 1050 588z" fill="#2c2c2c"/>
              <path d="M112 752L1044 896l22-4-4 32-22 4L112 776z" fill="#525050"/>
              <path d="M112 752l10 4 922 142-4 10L112 764z" fill="#3a3a3a"/><path d="M135 780L1040 920v8L130 788z" fill="#777272"/>
              <!-- housing -->
              <path d="M196 572Q200 560 215 552L290 510 322 500 420 432H450L525 385H540V412L585 390H602V421L645 394H663V433L712 398H729V442L778 403H795V449L845 450 1020 468Q1040 470 1043 485L1053 590 1010 650 960 660 215 576z" fill="#2e2e2e"/>
              <path d="M540 412L390 520M602 421L470 525M663 433L555 535M729 442L640 545M795 449L730 550M880 470L820 560" stroke="#292929" stroke-width="4"/>
              <path d="M1043 485l10 105-28 260-20-200z" fill="#303030"/>
              <path d="M196 575Q200 570 220 574L960 662Q1000 664 1008 650L1028 845Q1020 866 975 864L190 748Q172 742 175 725z" fill="url(#g-front)"/>
              <path d="M200 568Q215 572 235 576L960 654Q1000 660 1010 640" fill="none" stroke="#2a2a2a" stroke-width="8"/>
              <path d="M308 506h24l2 72-28-3zM390 513h24v74l-28-3zM474 522h22l2 75-30-4zM558 531h24v75l-30-4zM646 540h26l-4 75-30-4zM740 548h22v79l-33-4zM832 558h26v78l-35-4z" fill="#676767"/>
              <path d="M340 380Q345 375 378 375L420 432 330 500 308 524 290 522z" fill="#2c2c2c"/><path d="M340 380q5-5 28-3L330 492l-22 12-2 20-16-2z" fill="#454545"/>
              <ellipse cx="378" cy="412" rx="9" ry="18" fill="#777"/><path d="M371 406h12M371 414h14M372 422h12" stroke="#222" stroke-width="3"/>
              <path d="M844 428h60l-4 30-28 36h-30z" fill="url(#g-tube-v)"/><ellipse cx="874" cy="431" rx="31" ry="8" fill="#262626"/>
              <path d="M972 420l30-3 5 10-2 60-15 107-45-6z" fill="#434343"/><path d="M1000 418l8 6-2 80-8 20z" fill="#2a2a2a"/>
            </svg>
          </div>
          <div class="brand" aria-label="Cortona3D">
            <svg viewBox="0 0 28 28" aria-hidden="true"><path d="M14 14L24 1v13z" fill="#c8e030"/><path d="M14 14l14 9-11-4z" fill="#f0e020"/><path d="M14 14l2 14-6-7z" fill="#40d8d0"/><path d="M14 14L0 11l9 8z" fill="#309898"/><path d="M14 14L7 5l6 4z" fill="#556"/></svg>
            <span>Cortona<b>3D</b></span>
          </div>
        </main>
      </div>

      <section class="procedure">
        <div class="caption">
          <h2>Procedure Editor</h2>
          <button aria-label="Options"><svg><use href="#i-caret"/></svg></button>
          <button aria-label="Pin"><svg><use href="#i-pin"/></svg></button>
          <button aria-label="Close"><svg><use href="#i-close"/></svg></button>
        </div>
        <div class="toolbar proc-toolbar">
          <button class="tool doc-cyan" aria-label="New project"><svg><use href="#i-doc"/></svg></button>
          <button class="tool" aria-label="New tasks"><svg><use href="#i-docs"/></svg></button>
          <button class="tool doc-white" aria-label="New subtask"><svg><use href="#i-doc"/></svg></button>
          <button class="tool doc-amber off" aria-label="New step"><svg><use href="#i-doc"/></svg></button>
          <button class="tool doc-green off" aria-label="New action"><svg><use href="#i-doc"/></svg></button>
          <span class="sep"></span>
          <button class="tool off" aria-label="Edit"><svg><use href="#i-edit"/></svg></button>
          <button class="tool off" aria-label="Remove"><svg><use href="#i-docx"/></svg></button>
          <button class="tool off" aria-label="Duplicate"><svg><use href="#i-docy"/></svg></button>
          <span class="sep"></span>
          <button class="tool off" aria-label="Move up"><svg><use href="#i-up"/></svg></button>
          <button class="tool off" aria-label="Move down"><svg><use href="#i-down"/></svg></button>
          <span class="sep"></span>
          <button class="tool off" aria-label="Flag"><svg><use href="#i-flag"/></svg></button>
          <button class="tool off" aria-label="Next flag"><svg><use href="#i-flagr"/></svg></button>
          <button class="tool off" aria-label="Previous flag"><svg><use href="#i-flagl"/></svg></button>
          <span class="sep"></span>
          <button class="tool off" aria-label="Insert branch"><svg><use href="#i-branch"/></svg></button>
          <button class="tool off" aria-label="Swap"><svg><use href="#i-swap"/></svg></button>
          <span class="sep"></span>
          <button class="tool" aria-label="Zoom in"><svg><use href="#i-zoomin"/></svg></button>
          <button class="tool" aria-label="Zoom out"><svg><use href="#i-zoomout"/></svg></button>
          <span class="sep"></span>
          <button class="tool" aria-label="Word wrap"><svg><use href="#i-wrap"/></svg></button>
          <button class="tool active" aria-label="Comments"><svg><use href="#i-card"/></svg></button>
          <button class="tool" aria-label="Paste"><svg><use href="#i-paste"/></svg></button>
          <button class="tool" aria-label="Colors"><svg><use href="#i-wheel"/></svg></button>
        </div>
        <div class="panes">
          <div class="pane steps">
            <div class="step project"><span class="fold"></span>PROJECT ProcZestawienieLampa05</div>
            <div class="step"><span class="fold"></span></div>
            <div class="step task"><span class="fold"><button aria-label="Collapse">−</button></span>TASK</div>
            <div class="step subtask"><span class="fold"><button aria-label="Collapse">−</button></span>SUBTASK <em>1</em></div>
            <div class="step action"><span class="fold"><button aria-label="Expand">+</button></span>Rotate the&nbsp;<a href="#">Zestawienie Lampa05</a></div>
            <div class="step action"><span class="fold"><button aria-label="Expand">+</button></span>Detach the&nbsp;<a href="#">ramka.par:1</a></div>
            <div class="step action selected"><span class="fold"><button aria-label="Expand">+</button></span>Remove the&nbsp;<a href="#">ramka.par:1</a></div>
            <div class="step action"><span class="fold"><button aria-label="Expand">+</button></span>Detach the&nbsp;<a href="#">1</a></div>
            <div class="step action"><span class="fold"><button aria-label="Expand">+</button></span>Remove the&nbsp;<a href="#">odblysk.psm:1</a></div>
            <div class="hscroll idle"><i class="left"></i><i class="right"></i></div>
          </div>
          <div class="pane comments">
            <div class="format-bar">
              <button class="omega" aria-label="Symbol">Ω</button><span class="bar"></span>
              <button><b>B</b></button><button><b><i>I</i></b></button><button><b><u>U</u></b></button>
              <button aria-label="Font"><svg><use href="#i-fontglobe"/></svg></button><span class="bar"></span>
              <button class="grow" aria-label="Grow font">A<sup>▴</sup></button><button class="shrink" aria-label="Shrink font">A<sup>▾</sup></button><span class="bar"></span>
              <button class="script">x<sup>2</sup></button><button class="script">x<sub>2</sub></button><span class="bar"></span>
              <button class="para" aria-label="List"><svg><use href="#i-lines"/></svg></button>
              <button class="para" aria-label="Outdent"><svg><use href="#i-outdent"/></svg></button>
              <button class="para" aria-label="Indent"><svg><use href="#i-indent"/></svg></button>
            </div>
            <ul class="comment-list">
              <li></li>
              <li>Demontaż Lampy</li>
              <li>Rzut okiem na całość</li>
              <li>Wysunąć zatrzaski ramki z obudowy</li>
              <li>i odłożyć na bok</li>
              <li>Otworzyć obudowę</li>
              <li>Zdjąć płytkę aluminiową - radiator z kołków ustalających pokrywy</li>
            </ul>
            <div class="hscroll idle"><i class="left"></i><i class="right"></i></div>
          </div>
          <div class="pane timeline">
            <div class="chart">
              <ol class="ruler"><li>1</li><li>2</li><li>3</li><li>4</li><li>5</li><li>6</li><li>7</li><li>8</li><li></li></ol>
              <div class="lanes">
                <div class="lane"></div>
                <div class="lane"></div>
                <div class="lane"><span class="span teal" style="--from: 0; --len: 10"></span></div>
                <div class="lane"><span class="span blue" style="--from: 0; --len: 1"></span></div>
                <div class="lane"><span class="span blue" style="--from: 1; --len: 2"></span></div>
                <div class="lane"><span class="span red" style="--from: 3; --len: 3.5"></span></div>
                <div class="lane"><span class="span blue" style="--from: 6.5; --len: 2"></span></div>
                <div class="lane"><span class="span blue" style="--from: 8.5; --len: 2"></span></div>
                <span class="playhead" style="--from: 5"></span>
              </div>
            </div>
            <div class="vscroll"><i class="up"></i><span class="thumb"></span><i class="down"></i></div>
            <div class="hscroll"><i class="left"></i><span class="thumb"></span><i class="right"></i></div>
            <div class="corner"></div>
          </div>
        </div>
      </section>
    </div>

    <aside class="side-tabs">
      <button><svg><use href="#i-puzzle"/></svg>Object Gallery</button>
      <button><svg><use href="#i-tag"/></svg>Metadata</button>
    </aside>
  </div>

  <div class="toolbars playback">
    <div class="toolbar">
      <span class="grip"></span>
      <button class="tool off" aria-label="Repeat"><svg><use href="#i-cycle"/></svg></button>
      <button class="tool active" aria-label="Sync"><svg><use href="#i-cycley"/></svg></button>
      <span class="sep"></span>
      <button class="tool" aria-label="Play"><svg><use href="#i-play"/></svg></button>
      <button class="tool active" aria-label="Pause"><svg><use href="#i-pause"/></svg></button>
      <button class="tool" aria-label="Stop"><svg><use href="#i-stop"/></svg></button>
      <button class="tool" aria-label="Rewind"><svg><use href="#i-rew"/></svg></button>
      <button class="tool" aria-label="Fast forward"><svg><use href="#i-ffw"/></svg></button>
      <button class="tool" aria-label="Step back"><svg><use href="#i-stepb"/></svg></button>
      <button class="tool" aria-label="Step forward"><svg><use href="#i-stepf"/></svg></button>
      <span class="sep"></span>
      <button class="tool doc-white" aria-label="Publish page"><svg><use href="#i-pdoc"/></svg></button>
      <button class="tool doc-cyan" aria-label="Publish project"><svg><use href="#i-pdoc"/></svg></button>
      <button class="tool" aria-label="Record"><svg><use href="#i-film"/></svg></button>
      <button class="tool tool-wide speed"><small>x</small>1</button>
      <span class="sep"></span>
      <button class="tool" aria-label="Fit width"><svg><use href="#i-width"/></svg></button>
      <button class="tool" aria-label="Axes"><svg><use href="#i-axes"/></svg></button>
      <button class="tool" aria-label="Magnify"><svg><use href="#i-magnify"/></svg></button>
      <button class="tool active" aria-label="Safe frame"><svg><use href="#i-safe"/></svg></button>
      <button class="more" aria-label="More"><svg><use href="#i-chev"/></svg></button>
    </div>
  </div>

  <footer class="statusbar">
    <span class="ready">Ready</span>
    <span class="cell">Fraction: 0.2282</span>
    <span class="cell procedure-name">Generic Procedure v.2.10</span>
    <span class="cell lang">EN</span>
    <span class="orb"></span>
  </footer>
</body>
</html>
```
FILE: styles.css
```
* {
  box-sizing: border-box;
}

body {
  margin: 0;
  min-height: 100vh;
  display: flex;
  flex-direction: column;
  font-family: "Open Sans", "Noto Sans", sans-serif;
  font-size: 11px;
  line-height: 15px;
  color: #000;
  background: linear-gradient(to right, #d6d6d6, #f2f2f2);
  overflow: hidden;
}

button {
  margin: 0;
  padding: 0;
  border: 0;
  background: none;
  font: inherit;
  color: inherit;
}

ul, ol {
  margin: 0;
  padding: 0;
  list-style: none;
}

.sprite {
  position: absolute;
}

/* title bar */
.titlebar {
  display: flex;
  align-items: center;
  height: 22px;
  padding: 0 3px 2px;
  border-top: 1px solid #333;
  background: linear-gradient(#97b3d3, #b9d1ea);
}

.app-icon {
  width: 16px;
  height: 16px;
}

.title {
  flex: 1;
  margin: 0 0 0 7px;
  font-size: 11px;
  font-weight: normal;
}

.window-buttons {
  display: flex;
  gap: 2px;
}

.win {
  width: 31px;
  height: 17px;
  border: 1px solid #5f7896;
  border-radius: 2px;
  background: linear-gradient(#c3d7ec 50%, #98b4d2 50%, #b8d0ea);
  box-shadow: inset 0 0 0 1px rgba(255, 255, 255, 0.5);
}

.win svg {
  display: block;
  width: 14px;
  height: 12px;
  margin: auto;
}

.win-close {
  border-color: #431422;
  background: linear-gradient(#e5a193 50%, #b93c26 50%, #d48068);
}

/* menu */
.menubar {
  display: flex;
  align-items: center;
  height: 24px;
  padding-bottom: 1px;
}

.menubar button {
  padding: 0 7px;
  margin-right: 1px;
}

.grip {
  flex: none;
  width: 10px;
  height: 16px;
  background: radial-gradient(circle, #999 1px, transparent 1px) 3px 0 / 4px 4px repeat-y;
}

/* toolbars */
.toolbars {
  display: flex;
  height: 26px;
}

.toolbar {
  display: flex;
  align-items: center;
  height: 26px;
  border-radius: 3px;
  background: linear-gradient(#fff, #ececec 40%, #c2c2c2);
}

.tool {
  display: flex;
  align-items: center;
  justify-content: center;
  flex: none;
  width: 22px;
  height: 22px;
}

.tool svg {
  width: 16px;
  height: 16px;
}

.tool-wide {
  width: 26px;
  background: linear-gradient(135deg, transparent 50%, #555 50%) right 2px bottom 2px / 4px 4px no-repeat;
}

.off svg {
  opacity: 0.6;
}

.active {
  border: 1px solid #3399ff;
  background: #d8e8f8;
}

.sep {
  flex: none;
  width: 8px;
  height: 16px;
  background: linear-gradient(#b4b4b4, #b4b4b4) center / 1px 100% no-repeat;
}

.drop {
  display: flex;
  align-items: center;
  justify-content: center;
  flex: none;
  width: 13px;
  height: 22px;
}

.drop svg {
  width: 5px;
  height: 5px;
}

.more {
  display: flex;
  align-items: flex-end;
  justify-content: center;
  width: 10px;
  height: 26px;
  margin: 0 1px 0 2px;
  padding-bottom: 3px;
  border-radius: 0 3px 3px 0;
  background: linear-gradient(#ececec, #9c9c9c);
}

.more svg {
  width: 6px;
  height: 8px;
}

.doc-cyan { color: #18c8d0; }
.doc-white { color: #fff; }
.doc-amber { color: #ffc820; }
.doc-green { color: #20e020; }

/* docks */
.workspace {
  flex: 1;
  display: flex;
}

.docks {
  flex: 1;
  min-width: 0;
  display: flex;
  flex-direction: column;
}

.upper {
  flex: 1;
  display: flex;
  min-height: 0;
}

.item-panel {
  display: flex;
  flex-direction: column;
  width: 360px;
  margin-right: 5px;
}

.caption {
  display: flex;
  align-items: center;
  gap: 8px;
  height: 19px;
  padding: 0 5px 0 4px;
  border: 1px solid #a0a0a0;
  border-left: 0;
  background: #bbb;
  color: #fff;
}

.caption h2 {
  flex: 1;
  margin: 0;
  font-size: 11px;
  font-weight: normal;
}

.caption button {
  display: flex;
  align-items: center;
  justify-content: center;
  width: 9px;
  height: 9px;
}

.caption svg {
  width: 9px;
  height: 8px;
}

.tree-frame {
  flex: 1;
  display: flex;
  margin-top: 1px;
  padding: 3px 3px 2px;
  border: 1px solid #999;
  border-left-color: #ccc;
  background: #ececec;
}

.tree {
  flex: 1;
  padding: 1px 8px;
  border: 1px solid #828790;
  background: #fff;
}

.node {
  display: flex;
  align-items: center;
  height: 18px;
}

.node label {
  display: flex;
  align-items: center;
}

.node svg {
  width: 16px;
  height: 16px;
  margin: 0 4px 0 3px;
}

.node input {
  appearance: none;
  width: 12px;
  height: 12px;
  margin: 0;
  border: 1px solid #000e30;
  background: #fff url("data:image/svg+xml,%3Csvg xmlns='http://www.w3.org/2000/svg' viewBox='0 0 10 10'%3E%3Cpath d='M1.500 1.500h5v5h-5z' fill='%23ffd830' stroke='%23301800'/%3E%3Cpath d='M3.500 3.500h5v5h-5z' fill='%23ffb000' stroke='%23301800'/%3E%3C/svg%3E") center / 10px 10px no-repeat;
}

.expander {
  width: 9px;
  height: 9px;
  border: 1px solid #919191;
  border-radius: 1px;
  background: linear-gradient(135deg, #fff, #d8d8d8);
  font-size: 10px;
  line-height: 7px;
  color: #2040a0;
}

.twig {
  width: 8px;
  height: 1px;
  background: repeating-linear-gradient(to right, #888 0 1px, transparent 1px 2px);
}

.twig-leaf {
  width: 13px;
  margin-left: 4px;
}

.branch {
  margin-left: 19px;
}

.branch li {
  background: repeating-linear-gradient(#888 0 1px, transparent 1px 2px) 4px 0 / 1px 100% no-repeat;
}

.branch .last {
  background-size: 1px 9px;
}

.tabs {
  display: flex;
  height: 22px;
  margin-bottom: 6px;
  padding-left: 2px;
  color: #6d6d6d;
}

.tab {
  display: flex;
  align-items: center;
  width: 70px;
  padding-left: 3px;
  white-space: nowrap;
}

.tab + .tab {
  padding-left: 4px;
}

.tab + .tab + .tab {
  border-left: 1px solid #a5a5a5;
  height: 15px;
  margin-top: 4px;
  padding-left: 3px;
}

.tab svg {
  flex: none;
  width: 16px;
  height: 16px;
  margin-right: 1px;
}

.tab.current {
  border: 1px solid #999;
  border-top: 0;
  border-radius: 0 0 3px 3px;
  background: #fff;
  color: #000;
}

/* 3D view */
.view3d {
  position: relative;
  flex: 1;
  display: flex;
  justify-content: center;
  margin-bottom: 5px;
  border: 1px solid #f4f4f4;
  border-top: 2px solid #808080;
  border-left-color: #666;
  background: #ffffe1;
}

.frame {
  position: relative;
  height: 100%;
  aspect-ratio: 1;
  border: 1px solid #f00;
}

.model {
  display: block;
  width: 100%;
  height: 100%;
}

.brand {
  position: absolute;
  right: 9px;
  bottom: 8px;
  display: flex;
  align-items: center;
  width: 132px;
  height: 37px;
  padding-left: 4px;
  border: 1px solid #777;
  border-radius: 6px;
  background: radial-gradient(ellipse at 50% -20%, #555 0 50%, #1a1a1a 60%, #000);
  color: #fff;
  font-family: "Open Sans", sans-serif;
  font-size: 18px;
}

.brand svg {
  width: 28px;
  height: 28px;
  margin-right: 2px;
}

.brand b {
  font-weight: normal;
  color: #3fa0a0;
}

/* procedure editor */
.proc-toolbar {
  height: 25px;
  padding-left: 2px;
  border-radius: 0;
}

.panes {
  display: flex;
  gap: 5px;
  padding-left: 1px;
}

.pane {
  border: 1px solid #6e6e6e;
  border-width: 2px 1px 1px 2px;
  border-right-color: #f8f8f8;
  border-bottom-color: #f8f8f8;
  background: #fff;
}

.steps {
  width: 435px;
}

.step {
  display: flex;
  align-items: center;
  height: 15px;
  white-space: pre;
}

.fold {
  display: flex;
  align-items: center;
  width: 18px;
  height: 15px;
  margin-right: 2px;
  padding-left: 2px;
  background: #f7f7f7;
}

.fold button {
  width: 9px;
  height: 9px;
  border: 1px solid #808080;
  background: #fff;
  font-size: 10px;
  font-weight: normal;
  line-height: 7px;
}

.project {
  color: #666;
}

.task,
.subtask {
  font-size: 12px;
  font-weight: bold;
}

.subtask .fold {
  margin-right: 20px;
}

.subtask em {
  font-style: normal;
  color: #00609a;
}

.action .fold {
  margin-right: 37px;
}

.action a {
  color: #800080;
}

.selected {
  background: linear-gradient(to right, #f7f7f7 18px, #fff4dc 18px);
}

.comments {
  width: 449px;
  display: flex;
  flex-direction: column;
}

.format-bar {
  display: flex;
  align-items: center;
  height: 24px;
  border-bottom: 1px solid #a0a0a0;
  background: #f0f0f0;
  color: #999;
  font-family: "Liberation Serif", serif;
  font-size: 15px;
}

.format-bar button {
  width: 23px;
  height: 22px;
  white-space: nowrap;
}

.format-bar svg {
  width: 16px;
  height: 16px;
  vertical-align: middle;
}

.format-bar sup,
.format-bar sub {
  font-size: 9px;
  line-height: 0;
}

.format-bar .bar {
  width: 1px;
  height: 17px;
  margin: 0 2px;
  background: #999;
}

.format-bar .omega {
  width: 25px;
  font-size: 19px;
  font-weight: bold;
}

.format-bar .grow {
  width: 27px;
  font-size: 18px;
  font-weight: bold;
}

.format-bar .shrink {
  font-size: 12px;
  font-weight: bold;
}

.format-bar .script,
.format-bar .para {
  width: 24px;
  font-size: 14px;
}

.comment-list {
  flex: 1;
  padding-top: 5px;
  background: #f0f0f0;
  font-family: "Liberation Sans", Arial, sans-serif;
}

.comment-list li {
  height: 15px;
  padding-left: 1px;
  border-top: 1px dotted #ccc;
  border-bottom: 2px solid #f0f0f0;
  background: #fff;
  line-height: 14px;
  white-space: nowrap;
}

.comment-list li:first-child {
  border-bottom-color: #fff;
}

.timeline {
  flex: 1;
  min-width: 0;
  display: grid;
  grid-template-columns: minmax(0, 1fr) 17px;
  background: #f0f0f0;
}

.chart {
  overflow: hidden;
  font-family: "Liberation Sans", Arial, sans-serif;
}

.ruler {
  display: flex;
  height: 15px;
  background: repeating-linear-gradient(to right, transparent 0 10px, #777 10px 11px, transparent 11px 20px, #777 20px 21px, transparent 21px 30px, #777 30px 31px, transparent 31px 40px, #777 40px 41px, transparent 41px 50px) 0 100% / 100% 4px no-repeat;
}

.ruler li {
  flex: none;
  width: 50px;
  padding-right: 1px;
  background: linear-gradient(#666, #666) right bottom / 1px 11px no-repeat;
  line-height: 12px;
  text-align: right;
}

.lanes {
  position: relative;
  height: 120px;
  background:
    repeating-linear-gradient(to right, #fff 0 50px, transparent 50px 100px),
    repeating-conic-gradient(#e4e4e4 0 25%, #fff 0 50%) 0 0 / 4px 4px;
}

.lane {
  height: 15px;
  padding-top: 1px;
}

/* fixed attachment keeps the checker in phase between bars */
.span {
  display: block;
  width: calc(var(--len) * 50px);
  height: 14px;
  margin-left: calc(var(--from) * 50px);
  border: 1px solid currentColor;
  background: repeating-conic-gradient(currentColor 0 25%, #fff 0 50%) 0 0 / 2px 2px fixed;
}

.teal { color: #1f7f7f; }
.blue { color: #0000b0; }
.red { color: #e60000; }

.playhead {
  position: absolute;
  top: 0;
  bottom: 0;
  left: calc(var(--from) * 50px);
  width: 1px;
  background: #000;
}

/* scroll bars */
.hscroll,
.vscroll {
  display: flex;
  align-items: center;
  background: #ececec;
}

.hscroll {
  height: 17px;
  padding: 0 6px;
}

.vscroll {
  flex-direction: column;
  padding: 8px 0;
}

.hscroll i,
.vscroll i {
  border: 3px solid transparent;
}

.hscroll .left {
  border-width: 3px 4px 3px 0;
  border-right-color: #333;
}

.hscroll .right {
  margin-left: auto;
  border-width: 3px 0 3px 4px;
  border-left-color: #333;
}

.idle .left { border-right-color: #888; }
.idle .right { border-left-color: #888; }

.vscroll .up {
  border-width: 0 3px 4px;
  border-bottom-color: #333;
}

.vscroll .down {
  margin-top: auto;
  border-width: 4px 3px 0;
  border-top-color: #333;
}

.thumb {
  border: 1px solid #999;
  border-radius: 2px;
}

.hscroll .thumb {
  width: 108px;
  height: 15px;
  margin-left: 8px;
  background: repeating-linear-gradient(to right, #666 0 1px, transparent 1px 3px) center / 9px 7px no-repeat, linear-gradient(#f6f6f6 50%, #dcdcdc 50%, #cfcfcf);
}

.vscroll .thumb {
  width: 15px;
  height: 39px;
  margin-top: 6px;
  background: repeating-linear-gradient(#666 0 1px, transparent 1px 3px) center / 7px 9px no-repeat, linear-gradient(to right, #f6f6f6 50%, #dcdcdc 50%, #cfcfcf);
}

.corner {
  background: radial-gradient(circle, #bbb 1px, transparent 1px) 5px 5px / 4px 4px;
  clip-path: polygon(100% 20%, 100% 90%, 20% 90%);
}

/* right side tabs */
.side-tabs {
  width: 23px;
  padding: 4px 0 0 2px;
  background: #d8d8d8;
}

.side-tabs button {
  display: flex;
  align-items: center;
  gap: 8px;
  width: 21px;
  min-height: 99px;
  margin-bottom: 14px;
  padding: 3px 2px 20px;
  border: 1px solid #999;
  border-right: 0;
  border-radius: 4px 0 0 4px;
  writing-mode: vertical-rl;
  font-family: "Liberation Sans", Arial, sans-serif;
  font-size: 12px;
  color: #666;
}

.side-tabs svg {
  width: 16px;
  height: 16px;
}

/* bottom */
.playback {
  height: 28px;
  border-bottom: 1px solid #999;
}

.speed {
  font-size: 15px;
  font-weight: bold;
  color: #1a2a60;
}

.speed small {
  font-size: 11px;
}

.statusbar {
  position: relative;
  display: flex;
  align-items: center;
  height: 19px;
  padding: 0 30px 0 4px;
  border-top: 1px solid #fff;
  border-bottom: 1px solid #222;
  background: #f0eded;
}

.ready {
  flex: 1;
}

.cell {
  padding: 0 10px 0 4px;
  border-right: 1px solid #ccc;
}

.procedure-name {
  width: 176px;
}

.lang {
  width: 26px;
  padding-right: 0;
}

.orb {
  position: absolute;
  left: 14px;
  bottom: 0;
  width: 26px;
  height: 4px;
  border-top: 1px solid #4a7890;
  border-radius: 50% 50% 0 0;
  background: #b8d0e0;
}
```
